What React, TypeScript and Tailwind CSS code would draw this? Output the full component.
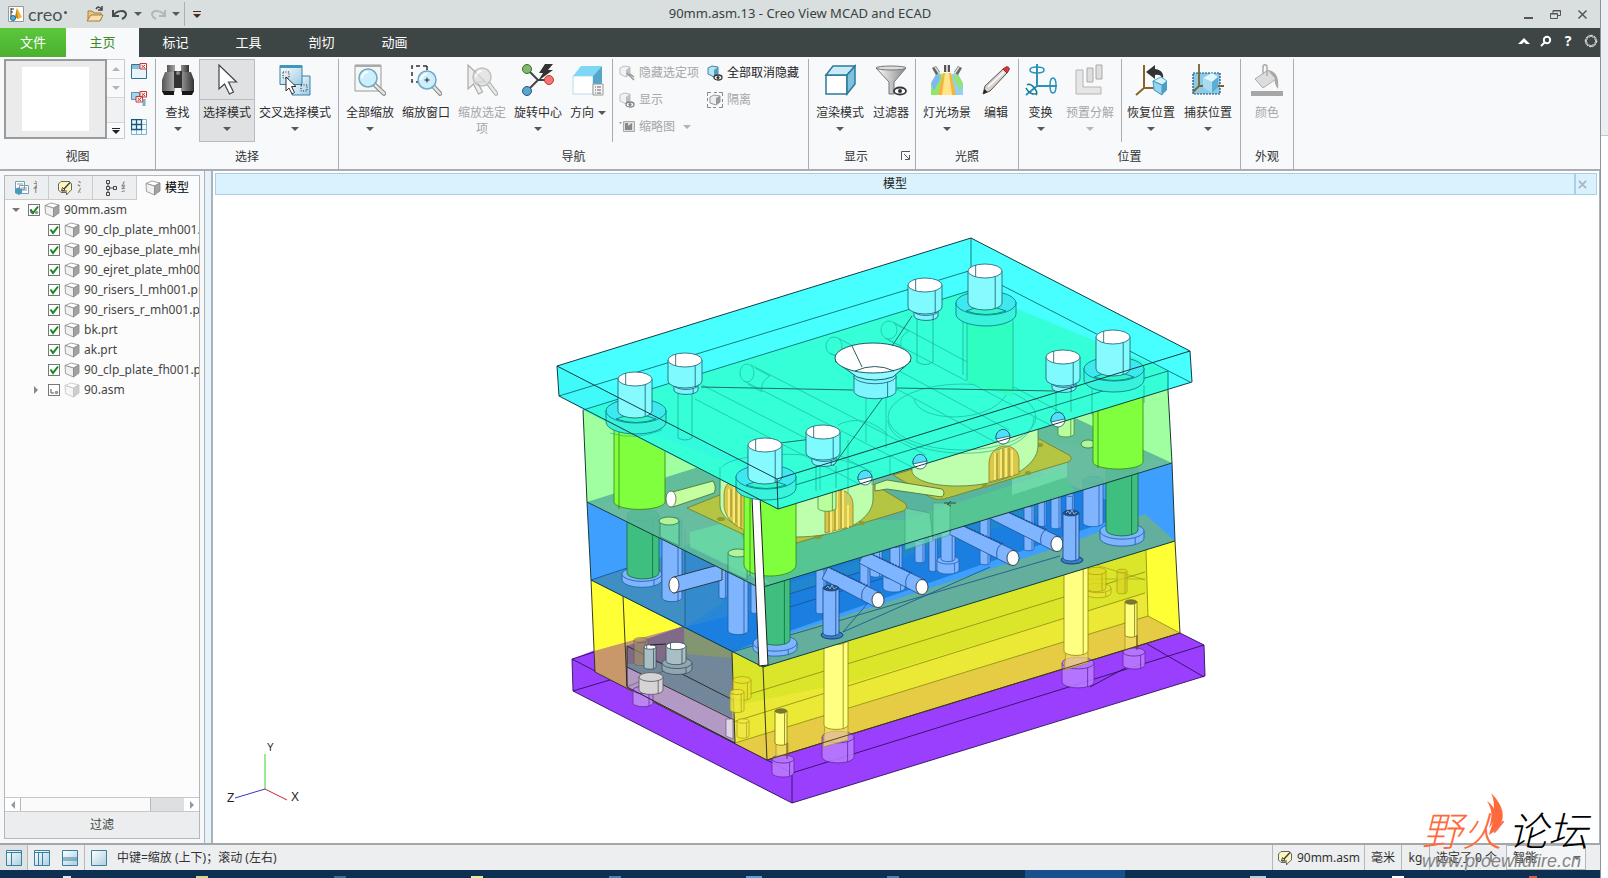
import type { ReactNode } from 'react';
import clsx from 'clsx';

const treeItems = [
  '90_clp_plate_mh001.prt',
  '90_ejbase_plate_mh001.prt',
  '90_ejret_plate_mh001.prt',
  '90_risers_l_mh001.prt',
  '90_risers_r_mh001.prt',
  'bk.prt',
  'ak.prt',
  '90_clp_plate_fh001.prt',
];

const menuTabs = ['标记', '工具', '剖切', '动画'];

/* ---------- small helpers ---------- */

function Caret({ className }: { className?: string }) {
  return (
    <svg viewBox="0 0 8 4" className={clsx('h-1 w-2 shrink-0', className)} fill="currentColor">
      <path d="M0 0h8L4 4z" />
    </svg>
  );
}

function Icon({ children, size = 32 }: { children: ReactNode; size?: number }) {
  return (
    <svg viewBox="0 0 32 32" width={size} height={size} className="shrink-0" aria-hidden="true">
      {children}
    </svg>
  );
}

function Cube({ size = 16, faded = false }: { size?: number; faded?: boolean }) {
  return (
    <svg viewBox="0 0 16 16" width={size} height={size} className="shrink-0" opacity={faded ? 0.5 : 1}>
      <path d="M1 3.500 7 1l8 2-5.500 3z" fill="#fff" stroke="#8a8a8a" strokeWidth=".8" />
      <path d="M1 3.500 9.500 6v9L1.500 11.500z" fill="#f1f1f1" stroke="#8a8a8a" strokeWidth=".8" />
      <path d="M9.500 6 15 3v8l-5.500 4z" fill="#a2a2a2" stroke="#8a8a8a" strokeWidth=".8" />
    </svg>
  );
}

/* ---------- ribbon icons ---------- */

function Binoculars() {
  return (
    <Icon>
      <defs>
        <linearGradient id="bino">
          <stop offset="0" stopColor="#555" />
          <stop offset=".45" stopColor="#bbb" />
          <stop offset="1" stopColor="#333" />
        </linearGradient>
      </defs>
      <path d="M5 1h8v7H5zM19 1h8v7h-8z" fill="url(#bino)" />
      <path d="M3 8h10v20H0V16zM29 8H19v20h13V16z" fill="url(#bino)" />
      <path d="M12 7h8v17h-8z" fill="#333" />
      <path d="M0 27h12v4H2zM20 27h12l-2 4H20z" fill="#161616" />
      <circle cx="16" cy="9" r="2" fill="#888" />
    </Icon>
  );
}

function Arrow({ faded }: { faded?: boolean }) {
  return (
    <path
      d="M8 1v24l5.500-5 5 10 4-2-5-10h8z"
      fill={faded ? '#eee' : '#fff'}
      stroke={faded ? '#aaa' : '#444'}
      strokeWidth="1.200"
    />
  );
}

function CrossSelect() {
  return (
    <Icon>
      <defs>
        <linearGradient id="win" x2="1" y2="1">
          <stop offset="0" stopColor="#fff" />
          <stop offset="1" stopColor="#9ccbe3" />
        </linearGradient>
      </defs>
      <path d="M13 12h18v19H13z" fill="url(#win)" stroke="#3283a6" />
      <path d="M1 1.500h22v19H1z" fill="url(#win)" stroke="#3283a6" />
      <path d="M1 1h22v3H1z" fill="#3e97be" />
      <path d="M4 8h6v6H4zM22 21h6v6h-6z" fill="none" stroke="#222" strokeDasharray="1 1.500" />
      <path d="M7 13v14l3-3 3 6 2.500-1.500-3-6H17z" fill="#fff" stroke="#333" />
    </Icon>
  );
}

function Lens({ x, y, r, faded }: { x: number; y: number; r: number; faded?: boolean }) {
  return (
    <>
      <path d={`M${x + r * 0.7} ${y + r * 0.7}L30 29.500`} stroke="#888" strokeWidth="4.500" strokeLinecap="round" />
      <path d={`M${x + r * 0.7} ${y + r * 0.7}L30 29.500`} stroke="#e3e3e3" strokeWidth="2.500" strokeLinecap="round" />
      <circle cx={x} cy={y} r={r} fill={faded ? '#ddd' : '#cdeefa'} stroke={faded ? '#aaa' : '#6ba9c4'} strokeWidth="1.500" />
      <path d={`M${x - r + 3} ${y}a${r - 3} ${r - 3} 0 0 1 ${r - 3} ${-r + 3}`} stroke="#fff" strokeWidth="2" fill="none" />
    </>
  );
}

function ZoomAll() {
  return (
    <Icon>
      <path d="M1 1h26v26H1z" fill="#f6f6f6" stroke="#999" />
      <path d="M1 1h26v2H1z" fill="#aaa" />
      <Lens x={14} y={14} r={9} />
    </Icon>
  );
}

function ZoomWindow() {
  return (
    <Icon>
      <path d="M17 2H2v16h6M17 2v5" fill="none" stroke="#333" strokeWidth="1.500" strokeDasharray="4 3" />
      <Lens x={17} y={16} r={9} />
      <path d="M14.500 16h5M17 13.500v5" stroke="#222" />
    </Icon>
  );
}

function ZoomSelected() {
  return (
    <Icon>
      <g transform="translate(-6 0)"><Arrow faded /></g>
      <g opacity=".7"><Lens x={16} y={13} r={9} faded /></g>
    </Icon>
  );
}

function SpinCenter() {
  return (
    <Icon>
      <path d="M5 5l11 11L5 27M16 16h11" stroke="#444" strokeWidth="2" fill="none" />
      <path d="M23 0h8l-5 6h5L16 17l5-8h-4z" fill="#333" />
      <circle cx="5" cy="5" r="4.500" fill="#7fba6a" stroke="#3d6b33" />
      <circle cx="5" cy="27" r="4.500" fill="#5aa5cf" stroke="#27597a" />
      <circle cx="27" cy="16" r="4.500" fill="#f77470" stroke="#b53d3a" />
    </Icon>
  );
}

function Orientation() {
  return (
    <Icon>
      <path d="M1 12h20v18H1z" fill="#fff" stroke="#b9dcea" />
      <path d="M1 12 9 2h21l-9 10z" fill="#7ed7f5" />
      <path d="M21 12l9-10v17l-9 11z" fill="#55a6cb" />
      <path d="M21 20h10v11H21z" fill="#f4f4f4" stroke="#999" />
      <path d="M23 23h1m1 0h4M23 26h1m1 0h4M23 29h1m1 0h4" stroke="#666" />
    </Icon>
  );
}

function RenderMode() {
  return (
    <Icon>
      <path d="M2 11h21v19H2z" fill="#fff" stroke="#2a7a9c" strokeWidth="1.500" />
      <path d="M2 11l7-9h22l-8 9z" fill="#c9eaf6" stroke="#2a7a9c" strokeWidth="1.500" />
      <path d="M23 11l8-9v18l-8 10z" fill="#7fc0dd" stroke="#2a7a9c" strokeWidth="1.500" />
    </Icon>
  );
}

function FilterIcon() {
  return (
    <Icon>
      <defs>
        <linearGradient id="fun">
          <stop offset="0" stopColor="#fff" />
          <stop offset="1" stopColor="#888" />
        </linearGradient>
      </defs>
      <path d="M1 4h30L19 18v12h-5V18z" fill="url(#fun)" stroke="#777" />
      <ellipse cx="16" cy="4" rx="15" ry="2" fill="#ddd" stroke="#777" />
      <ellipse cx="25" cy="27" rx="6" ry="3.500" fill="#fff" stroke="#333" strokeWidth="1.800" />
      <circle cx="25" cy="27" r="2" fill="#333" />
    </Icon>
  );
}

function Lights() {
  return (
    <Icon>
      <path d="M0 31V20l6-12 9 4-3 19z" fill="#8ee86b" />
      <path d="M32 31V20L26 8l-9 4 3 19z" fill="#8fd0f7" />
      <path d="M0 19 6 9l4 4-7 14z" fill="#7fb8f2" />
      <path d="M32 19 26 9l-4 4 7 14z" fill="#94e373" />
      <path d="M12 9h8l5 22H7z" fill="#fbb13c" />
      <path d="M14 9h4l3 22H11z" fill="#ffe58a" />
      <path d="M13 1h6v7h-6z" fill="#555" />
      <path d="M15 1h2v7h-2z" fill="#ccc" />
      <path d="M1 4l4-2 4 6-4 3zM31 4l-4-2-4 6 4 3z" fill="#666" />
      <path d="M4 3l4 6M28 3l-4 6" stroke="#ddd" strokeWidth="1.500" />
    </Icon>
  );
}

function PencilIcon() {
  return (
    <Icon>
      <path d="M3 30l2-8L23 5l4 4L10 27z" fill="#d9d2cd" stroke="#555" />
      <path d="M23 5l3-2c2-1 4 1 3 3l-2 3z" fill="#d33b3b" stroke="#8e2525" />
      <path d="M3 30l1.500-5 3 3z" fill="#222" />
      <path d="M8 23 24 8" stroke="#fff" strokeWidth="1.500" />
    </Icon>
  );
}

function TransformIcon() {
  return (
    <Icon>
      <g fill="none" stroke="#2a93bd" strokeWidth="1.500">
        <path d="M12 0v22h20" strokeWidth="2" />
        <path d="M12 22 1 31" strokeWidth="2" />
        <path d="M5 6c0-4 14-4 14 0s-14 4-14 0" />
        <path d="M28 14c4 0 4 15 0 15s-4-15 0-15" />
        <path d="M2 21c4-3 12 7 9 10M1 24c3 6 8 7 11 5" stroke="#167a8b" />
      </g>
    </Icon>
  );
}

function ExplodeIcon() {
  return (
    <Icon>
      <path d="M2 6h7v17h18v7H2z" fill="#e6e6e6" stroke="#b5b5b5" />
      <path d="M13 4h6v14h-6zM22 1h6v14h-6z" fill="#dedede" stroke="#aaa" />
    </Icon>
  );
}

function RestoreIcon() {
  return (
    <Icon>
      <path d="M9 1v23M9 24l-8 7M9 24h12" stroke="#8a6327" strokeWidth="2" fill="none" />
      <path d="M11 8l9-7v4c7 1 9 5 8 10-2-4-4-5-8-4v4z" fill="#333" />
      <path d="M18 17l8-4 6 4-5 4z" fill="#d5f3ff" stroke="#55a5c8" />
      <path d="M18 17l9 4v10l-8-5z" fill="#94d5ef" stroke="#4796bc" />
      <path d="M27 21l5-4v9l-5 5z" fill="#4a9fc6" />
    </Icon>
  );
}

function CaptureIcon() {
  return (
    <Icon>
      <path d="M1 9h27v21H1z" fill="#8ecae8" stroke="#0c4c73" strokeWidth="1.200" strokeDasharray="2 1" />
      <path d="M7 0v22M7 22l-6 6M7 22h25" stroke="#776332" strokeWidth="1.800" />
      <path d="M11 14l9-5 6 4-6 5z" fill="#e2f7ff" />
      <path d="M11 14l9 4v11l-9-6z" fill="#a9dcf1" />
      <path d="M20 18l6-5v10l-6 6z" fill="#5aaed3" />
    </Icon>
  );
}

function PaintIcon() {
  return (
    <Icon>
      <path d="M0 27h32v5H0z" fill="#a6a6a6" />
      <path d="M4 15 17 6l8 9-13 9z" fill="#ddd" stroke="#aaa" />
      <path d="M17 6c9 2 11 8 10 19-3-4-4-8-3-11z" fill="#a8a8a8" />
      <path d="M12 10V3c0-3 4-3 4 0v9" stroke="#aaa" strokeWidth="1.500" fill="none" />
    </Icon>
  );
}

function SmallCube({ faded, eye }: { faded?: boolean; eye?: boolean }) {
  return (
    <svg viewBox="0 0 16 16" width="16" height="16" className="shrink-0" opacity={faded ? 0.6 : 1}>
      <path d="M1 3 5 1l6 1v7l-4 3-6-3z" fill={faded ? '#eee' : '#b9e2f2'} stroke={faded ? '#999' : '#3b86a6'} />
      <path d="M7 5l4-3v7l-4 3z" fill={faded ? '#999' : '#4c9fc2'} />
      {eye ? (
        <g>
          <ellipse cx="11" cy="12.500" rx="4" ry="2.500" fill="#fff" stroke="#333" strokeWidth="1.300" />
          <circle cx="11" cy="12.500" r="1.500" fill="#333" />
        </g>
      ) : (
        <path d="M8 8l7 7M11 9l4 3" stroke="#555" strokeWidth="1.500" />
      )}
    </svg>
  );
}

function IsolateIcon() {
  return (
    <svg viewBox="0 0 16 16" width="16" height="16" className="shrink-0">
      <path d="M.5 4V.5H4M7 .5h3M12 .5h3.500V4M15.500 7v3M15.500 12v3.500H12M9 15.500H6M4 15.500H.5V12M.5 9V6" stroke="#888" fill="none" />
      <path d="M3 5l4-2 6 1v6l-4 3-6-2z" fill="#eee" stroke="#999" />
      <path d="M9 6l4-2v6l-4 3z" fill="#999" />
    </svg>
  );
}

/* ---------- ribbon parts ---------- */

type ToolProps = {
  icon: ReactNode;
  label: string;
  width: string;
  menu?: boolean;
  disabled?: boolean;
  active?: boolean;
};

function Tool({ icon, label, width, menu, disabled, active }: ToolProps) {
  return (
    <button
      disabled={disabled}
      className={clsx(
        'flex h-[83px] shrink-0 flex-col items-center border',
        width,
        active ? 'border-[#b9bcbe] bg-[#dfe1e2]' : 'border-transparent',
        disabled ? 'text-[#a5a7a9]' : 'text-[#2d2d2d]',
      )}
    >
      <span className={clsx('flex h-10 w-full shrink-0 items-center justify-center', active && 'border-b border-[#b9bcbe]')}>{icon}</span>
      <span className="mt-[3px] whitespace-nowrap text-xs leading-5">{label}</span>
      {menu && <Caret className={clsx('mt-1', disabled ? 'text-[#b5b7b9]' : 'text-[#55585a]')} />}
    </button>
  );
}

function Group({ title, width, children, launcher }: { title: string; width: string; children: ReactNode; launcher?: boolean }) {
  return (
    <section className={clsx('relative flex shrink-0 flex-col border-r border-[#a9acb0]', width)}>
      <div className="flex h-[84px] items-start">{children}</div>
      <h2 className={clsx('pt-1.5 text-center text-xs leading-4 text-[#333]', launcher && 'pr-3')}>{title}</h2>
      {launcher && (
        <button aria-label="显示选项" className="absolute right-1 bottom-2 size-2.5">
          <svg viewBox="0 0 10 10" className="size-full">
            <path d="M.5 9V.5H9M3 3l5 5M8.500 4v4.500H4" stroke="#555" fill="none" />
          </svg>
        </button>
      )}
    </section>
  );
}

function SmallTool({ icon, label, disabled, menu }: { icon: ReactNode; label: string; disabled?: boolean; menu?: boolean }) {
  return (
    <button disabled={disabled} className={clsx('flex h-[27px] items-center gap-1 whitespace-nowrap text-xs', disabled ? 'text-[#a5a7a9]' : 'text-[#222]')}>
      {icon}
      {label}
      {menu && <Caret className="ml-1 text-[#b0b2b4]" />}
    </button>
  );
}

function ViewIcon({ kind }: { kind: 'one' | 'two' | 'grid' }) {
  return (
    <svg viewBox="0 0 16 16" width="16" height="16">
      {kind === 'one' && (
        <>
          <path d="M.5 1.500h15v14H.5z" fill="#e7f4fa" stroke="#38708c" />
          <path d="M1 2h8v4H1z" fill="#85bfdb" />
          <path d="M9 .5h6.500v5.500H9z" fill="#fff" stroke="#c33" />
          <path d="M10.500 2l3.500 3M14 2l-3.500 3" stroke="#c33" />
        </>
      )}
      {kind === 'two' && (
        <>
          <path d="M.5 1.500h8v7h-8z" fill="#a9d3e6" stroke="#5a93ae" />
          <path d="M9 .5h6.500v5.500H9zM5 5.500h6.500v5.500H5z" fill="#fff" stroke="#c33" />
          <path d="M10.500 2l3.500 3M14 2l-3.500 3M6.500 7l3.500 3M10 7l-3.500 3" stroke="#c33" />
          <path d="M13 8v7" stroke="#8ab" strokeWidth="3" />
        </>
      )}
      {kind === 'grid' && (
        <>
          <path d="M5 .5h10.500v15H.5V10M10.500.5v15M5.500 10v5.500M.5 10.500h15M10 5.500h5.500" fill="none" stroke="#7eb4cc" />
          <path d="M.5.500h10v10H.5zM5.500.500v10M.5 5.500h10" fill="#eaf6fb" stroke="#15587b" strokeWidth="1.300" />
        </>
      )}
    </svg>
  );
}

function Ribbon() {
  return (
    <div className="flex h-28 shrink-0 overflow-hidden bg-[#f8f9fb] pt-[2px]">
      <Group title="视图" width="w-[156px]">
        <button aria-label="视图缩略图" className="ml-1 h-20 w-[103px] border-2 border-[#9a9b9d] bg-[#ebebec] px-4 py-1.5">
          <span className="block h-full bg-white" />
        </button>
        <div className="flex h-20 w-[18px] flex-col border-y border-r border-[#c9cbcd] text-[#b5b5b5]">
          <button aria-label="上一个" className="flex h-[19px] items-center justify-center border-b border-[#d5d7d9]"><Caret className="rotate-180" /></button>
          <button aria-label="下一个" className="flex h-[19px] items-center justify-center border-b border-[#d5d7d9]"><Caret /></button>
          <span className="flex-1 bg-[#f0f1f2]" />
          <button aria-label="更多视图" className="flex h-4 flex-col items-center justify-center gap-px border-t border-[#d5d7d9] text-[#222]">
            <span className="h-px w-2 bg-[#222]" />
            <Caret />
          </button>
        </div>
        <div className="flex h-20 flex-col justify-between py-1 pl-1.5">
          <button aria-label="关闭视图"><ViewIcon kind="one" /></button>
          <button aria-label="关闭全部视图"><ViewIcon kind="two" /></button>
          <button aria-label="平铺视图"><ViewIcon kind="grid" /></button>
        </div>
      </Group>

      <Group title="选择" width="w-[183px]">
        <Tool icon={<Binoculars />} label="查找" width="w-[43px]" menu />
        <Tool icon={<Icon><Arrow /></Icon>} label="选择模式" width="w-14" menu active />
        <Tool icon={<CrossSelect />} label="交叉选择模式" width="w-20" menu />
      </Group>

      <Group title="导航" width="w-[470px]">
        <span className="w-[3px]" />
        <Tool icon={<ZoomAll />} label="全部缩放" width="w-14" menu />
        <Tool icon={<ZoomWindow />} label="缩放窗口" width="w-14" />
        <div className="w-14">
          <button disabled className="flex w-14 flex-col items-center text-[#a5a7a9]">
            <span className="flex h-[41px] items-center"><ZoomSelected /></span>
            <span className="mt-[5px] px-1 text-xs leading-4">缩放选定项</span>
          </button>
        </div>
        <Tool icon={<SpinCenter />} label="旋转中心" width="w-14" menu />
        <button className="flex h-[83px] w-[44px] flex-col items-center text-[#2d2d2d]">
          <span className="flex h-[41px] shrink-0 items-center"><Orientation /></span>
          <span className="mt-[3px] flex items-center gap-1 whitespace-nowrap text-xs leading-5">方向<Caret className="text-[#55585a]" /></span>
        </button>
        <div className="ml-0.5 grid h-[83px] grid-cols-[88px_auto] content-start border-l border-[#a9acb0] pl-1.5">
          <SmallTool icon={<SmallCube faded />} label="隐藏选定项" disabled />
          <SmallTool icon={<SmallCube eye />} label="全部取消隐藏" />
          <SmallTool icon={<SmallCube faded eye />} label="显示" disabled />
          <SmallTool icon={<IsolateIcon />} label="隔离" disabled />
          <SmallTool
            icon={
              <svg viewBox="0 0 16 16" width="16" height="16">
                <path d="M0 3h3L1.500 5z" fill="#999" />
                <path d="M4.500 2.500h11v10h-11z" fill="#ddd" stroke="#aaa" />
                <path d="M6 4h3v3l4-3v7H6z" fill="#888" />
              </svg>
            }
            label="缩略图"
            disabled
            menu
          />
        </div>
      </Group>

      <Group title="显示" width="w-[107px]" launcher>
        <span className="w-0.5" />
        <Tool icon={<RenderMode />} label="渲染模式" width="w-[58px]" menu />
        <Tool icon={<FilterIcon />} label="过滤器" width="w-[44px]" />
      </Group>

      <Group title="光照" width="w-[103px]">
        <span className="w-0.5" />
        <Tool icon={<Lights />} label="灯光场景" width="w-[58px]" menu />
        <Tool icon={<PencilIcon />} label="编辑" width="w-[40px]" />
      </Group>

      <Group title="位置" width="w-[222px]">
        <Tool icon={<TransformIcon />} label="变换" width="w-[43px]" menu />
        <Tool icon={<ExplodeIcon />} label="预置分解" width="w-14" menu disabled />
        <span className="h-[83px] w-1 border-r border-[#a9acb0]" />
        <Tool icon={<RestoreIcon />} label="恢复位置" width="w-[58px]" menu />
        <Tool icon={<CaptureIcon />} label="捕获位置" width="w-[56px]" menu />
      </Group>

      <Group title="外观" width="w-[53px]">
        <Tool icon={<PaintIcon />} label="颜色" width="w-[52px]" disabled />
      </Group>
    </div>
  );
}

/* ---------- title bar ---------- */

function TitleBar() {
  return (
    <header className="relative flex h-7 shrink-0 items-center bg-[#d9dfdf] pl-2 text-[#555a5c]">
      <svg viewBox="0 0 16 16" width="16" height="16">
        <path d="M.5.500h15v15H.5z" fill="#fff" stroke="#999" />
        <path d="M3 2v9M3 3h3M3 6h2" stroke="#333" fill="none" />
        <path d="M9 2l5 9-4 2-3-2z" fill="#f2b632" />
        <path d="M9 2l1 11-3-2z" fill="#c98511" />
        <circle cx="5" cy="12" r="2.500" fill="#58aee0" stroke="#1a669c" />
      </svg>
      <span className="ml-1 flex w-12 items-center font-[Lato] text-lg leading-6 text-[#4c5254]">
        creo
        <span className="ml-px size-[3px] -translate-y-0.5 rounded-full bg-[#4c5254]" />
      </span>
      <button aria-label="打开" className="ml-2.5">
        <svg viewBox="0 0 18 16" width="18" height="16">
          <path d="M2 14V5h4l2 2h7v7z" fill="#e6c486" stroke="#a87f3a" />
          <path d="M1 15 5 9h12l-3 6z" fill="#f8dfaf" stroke="#a87f3a" />
          <path d="M10 3c2-3 4-2 5 0M16 0v4h-4" stroke="#444" strokeWidth="1.500" fill="none" />
        </svg>
      </button>
      <button aria-label="撤消" className="ml-2">
        <svg viewBox="0 0 16 14" width="16" height="14" fill="none" stroke="#454a4c" strokeWidth="2">
          <path d="M2 8c2-4 11-6 12-1 0 3-2 4-4 5" />
          <path d="M1 3v6h6" />
        </svg>
      </button>
      <button aria-label="撤消列表" className="ml-1.5"><Caret /></button>
      <button aria-label="重做" className="ml-2">
        <svg viewBox="0 0 16 14" width="16" height="14" fill="none" stroke="#b1b6b7" strokeWidth="2">
          <path d="M14 8C12 4 3 2 2 7c0 3 2 4 4 5" />
          <path d="M15 3v6H9" />
        </svg>
      </button>
      <button aria-label="重做列表" className="ml-1.5"><Caret /></button>
      <span className="ml-1 h-6 w-px bg-[#aab0b2]" />
      <button aria-label="自定义快速访问工具栏" className="ml-2 flex flex-col items-center gap-0.5 text-[#4a2e18]">
        <span className="h-px w-2 bg-current" />
        <Caret />
      </button>
      <h1 className="absolute left-1/2 -translate-x-1/2 whitespace-nowrap text-[13px] text-[#3a3f41]">90mm.asm.13 - Creo View MCAD and ECAD</h1>
      <div className="ml-auto flex items-center gap-4 pr-3">
        <button aria-label="最小化">
          <svg viewBox="0 0 11 11" width="11" height="11"><path d="M1 9h9" stroke="#555" strokeWidth="2" /></svg>
        </button>
        <button aria-label="还原">
          <svg viewBox="0 0 11 11" width="11" height="11" fill="none" stroke="#555">
            <path d="M.5 4.500h7v5h-7zM.5 5h7M3 4V1.500h7.500v5H8M3 2h7.500" />
          </svg>
        </button>
        <button aria-label="关闭">
          <svg viewBox="0 0 11 11" width="11" height="11"><path d="M1.500 1.500l8 8M9.500 1.500l-8 8" stroke="#555" strokeWidth="1.500" /></svg>
        </button>
      </div>
    </header>
  );
}

function MenuTabs() {
  return (
    <nav className="flex h-[29px] shrink-0 bg-[#3d4545] text-[13px] text-white">
      <button className="w-[66px] bg-gradient-to-b from-[#5cc73b] to-[#4bb02f]">文件</button>
      <button className="w-[73px] bg-[#f8f9fb] text-[#3f8a26]">主页</button>
      {menuTabs.map((tab) => (
        <button key={tab} className="w-[73px]">{tab}</button>
      ))}
      <div className="ml-auto flex items-center gap-2.5 pr-0.5 pb-1">
        <button aria-label="折叠功能区">
          <svg viewBox="0 0 12 8" width="12" height="8"><path d="M0 7 6 1l6 6H8L6 5 4 7z" fill="#fff" /></svg>
        </button>
        <button aria-label="搜索">
          <svg viewBox="0 0 12 12" width="12" height="12" fill="none" stroke="#fff" strokeWidth="2">
            <circle cx="7" cy="5" r="3.200" /><path d="M5 7l-4 4" />
          </svg>
        </button>
        <button aria-label="帮助" className="w-3 text-sm font-bold">?</button>
        <button aria-label="PTC">
          <svg viewBox="0 0 14 14" width="14" height="14" fill="none" stroke="#dfe3e3">
            <path d="M3 3h3l1-2 1 2h3v3l2 1-2 1v3H8l-1 2-1-2H3V8L1 7l2-1z" />
            <circle cx="7" cy="7" r="5.800" strokeDasharray="2 1" />
          </svg>
        </button>
      </div>
    </nav>
  );
}

/* ---------- model tree ---------- */

function Check({ label, asm, checked = true }: { label: string; asm?: boolean; checked?: boolean }) {
  return (
    <span className="relative size-3 shrink-0">
      <input
        type="checkbox"
        defaultChecked={checked}
        aria-label={label}
        className="peer block size-3 appearance-none border border-[#777] bg-white"
      />
      <svg viewBox="0 0 12 12" className="pointer-events-none absolute inset-0 hidden size-3 peer-checked:block">
        <path d="M2.500 5.500 5 9l5-6.500" stroke="#128a1a" strokeWidth="2" fill="none" />
      </svg>
      {asm && (
        <svg viewBox="0 0 12 12" className="pointer-events-none absolute inset-0 size-3">
          <path d="M3 5v4h3" stroke="#555" fill="none" /><circle cx="8.500" cy="8.500" r="1.800" fill="#999" />
        </svg>
      )}
    </span>
  );
}

function ModelTree() {
  return (
    <aside className="my-1 ml-1 flex w-[196px] shrink-0 flex-col border border-[#b5b8ba] bg-white text-xs text-[#444]">
      <div className="flex h-6 shrink-0">
        <button aria-label="视图列表" className="flex w-11 items-center gap-1 overflow-hidden border-r border-b border-[#c9cbcd] bg-[#eceef0] pl-2">
          <svg viewBox="0 0 16 16" width="16" height="16" className="shrink-0">
            <path d="M2.500 1.500h9v8h-9zM6.500 5.500h9v8h-9z" fill="#fff" stroke="#7d9dac" />
            <path d="M4 4h6M8 8h6M8 10h6" stroke="#7d9dac" />
            <path d="M2 9l3-1.500L9 9v4l-3 2-4-2z" fill="#4798bb" />
          </svg>
          <span className="w-1 overflow-hidden text-[#777]">视</span>
        </button>
        <button aria-label="注释" className="flex w-11 items-center gap-1 overflow-hidden border-r border-b border-[#c9cbcd] bg-[#eceef0] pl-2">
          <NoteIcon />
          <span className="w-1 overflow-hidden text-[#777]">注</span>
        </button>
        <button aria-label="结构" className="flex w-11 items-center gap-1 overflow-hidden border-r border-b border-[#c9cbcd] bg-[#eceef0] pl-3">
          <svg viewBox="0 0 12 16" width="12" height="16" className="shrink-0" fill="none" stroke="#444">
            <path d="M1.500.500h3v3h-3zM1.500 6.500h3v3h-3zM1.500 12.500h3v3h-3zM8.500 6.500h3v3h-3zM3 4v2M3 10v2M5 8h3" />
          </svg>
          <span className="w-1 overflow-hidden text-[#777]">结</span>
        </button>
        <button className="flex flex-1 items-center gap-1 bg-[#fafbfc] pl-2 text-black"><Cube />模型</button>
      </div>

      <ul className="min-h-0 flex-1 overflow-hidden whitespace-nowrap bg-[#fcfcfc]">
        <li className="flex h-5 items-center pl-[7px]">
          <Caret className="mr-2 text-[#777]" />
          <Check label="90mm.asm" asm />
          <span className="mx-1"><Cube /></span>
          90mm.asm
        </li>
        {treeItems.map((item) => (
          <li key={item} className="flex h-5 items-center pl-[43px]">
            <Check label={item} />
            <span className="mx-1"><Cube /></span>
            {item}
          </li>
        ))}
        <li className="flex h-5 items-center pl-[27px]">
          <Caret className="mr-2 -rotate-90 text-[#888]" />
          <Check label="90.asm" asm checked={false} />
          <span className="mx-1"><Cube faded /></span>
          90.asm
        </li>
      </ul>

      <div className="flex h-[15px] shrink-0 border-y border-[#c5c8ca] bg-white text-[#999]">
        <button aria-label="向左滚动" className="flex w-[15px] items-center justify-center"><Caret className="rotate-90" /></button>
        <div className="flex-1 bg-[#dddfe0]"><div className="h-full w-4/5 border-x border-[#b5b8ba] bg-[#fafafa]" /></div>
        <button aria-label="向右滚动" className="flex w-[15px] items-center justify-center"><Caret className="-rotate-90" /></button>
      </div>
      <button className="h-[26px] shrink-0 bg-[#ebedee]">过滤</button>
    </aside>
  );
}

function NoteIcon() {
  return (
    <svg viewBox="0 0 16 16" width="16" height="16" className="shrink-0">
      <path d="M4 1.500h8.500l2 2.500v6l-3 2.500-2 2.500v-2.500H4L1.500 10V4z" fill="#fdf6bd" stroke="#666" />
      <path d="M13 2.500 7 9" stroke="#444" strokeWidth="1.500" />
      <path d="M4.500 11l1-3.500L8 10zM5 11h5" stroke="#444" fill="none" />
    </svg>
  );
}

/* ---------- mold assembly ---------- */

type CylProps = { x: number; y: number; r: number; b: number; ry?: number; fill: string; top?: string; line?: string; o?: number };

// upright cylinder: top centre (x, y), radius r, bottom centre at height b
function Cyl({ x, y, r, b, ry = r * 0.37, fill, top, line = '#175a6d', o = 1 }: CylProps) {
  return (
    <g stroke={line} strokeWidth=".8" opacity={o}>
      <path d={`M${x - r} ${y}V${b}A${r} ${ry} 0 0 0 ${x + r} ${b}V${y}z`} fill={fill} />
      <path d={`M${x + r * 0.6} ${y + ry * 0.8}V${b + ry * 0.8}`} fill="none" />
      <ellipse cx={x} cy={y} rx={r} ry={ry} fill={top ?? fill} />
      {top === '#fff' && <path d={`M${x - r * 0.55} ${y - ry * 0.8}v${ry * 1.6}`} fill="none" />}
    </g>
  );
}

// horizontal bore running up-left from its open end
function Rod({ x, y, sx, sy, r = 6, fill }: { x: number; y: number; sx: number; sy: number; r?: number; fill: string }) {
  const cx = x - 13;
  const cy = y - 7;
  return (
    <g stroke="#1c4f91" strokeWidth=".8" fill={fill}>
      <path d={`M${sx + 3} ${sy - r}L${x + 3} ${y - r - 1}L${x - 3} ${y + r + 1}L${sx - 3} ${sy + r}z`} />
      <path d={`M${cx + 3} ${cy - r - 2}q-8 4-6 ${r * 2 + 3}`} />
      <path d={`M${sx + 3} ${sy - r}L${cx + 3} ${cy - r - 1}`} strokeWidth="1.500" strokeDasharray="2 1" />
      <ellipse cx={x} cy={y} rx={r} ry={r + 1.5} fill="#fff" stroke="#222" />
    </g>
  );
}

const blue = '#7fb4ff';
const deepBluePins = [
  [821, 568, 5, 612], [865, 555, 5, 586], [876, 545, 6, 575], [920, 540, 5, 561], [933, 535, 4, 570], [985, 515, 5, 563],
  [1029, 505, 5, 549], [1042, 500, 4, 525], [1056, 495, 5, 527], [1070, 495, 4, 530], [1093, 480, 10, 523], [723, 555, 4, 597], [755, 560, 4, 612],
];
const coverHoles = [
  [685, 360, 385], [823, 432, 457], [925, 285, 311], [1063, 357, 383],
];
const guideHoles = [
  [635, 379, 414], [765, 445, 480], [985, 271, 306], [1113, 337, 372],
];

function Mold() {
  return (
    <svg viewBox="215 195 1382 648" preserveAspectRatio="xMidYMid meet" className="h-full w-full" role="img" aria-label="90mm.asm">
      {/* bottom clamp plate */}
      <path d="M572 659 595 650 1180 633 1204 645 1205 676 792 803 573 691z" fill="#9b3fff" />
      <g stroke="#30105c" fill="none" strokeWidth=".9">
        <path d="M572 659 792 773 1204 645M572 659l1 32 219 112 413-127-1-31-24-12M792 773v30M572 659l26-8M573 691l80-24M1142 641l62 36" />
        <path d="M1090 687l37-20" />
      </g>

      {/* riser blocks */}
      <path d="M591 580 763 667 1175 541 1180 633 767 760 595 672z" fill="#ffff35" />
      <path d="M595 650 684 626 735 652v91L595 672z" fill="#c8986b" />
      <path d="M591 580 684 626 594 651z" fill="#ffff35" />
      <path d="M627 646 684 626 732 652 734 743 627 687z" fill="#b39ac5" />
      <path d="M627 646 684 626 732 652V718L627 667z" fill="#73879a" />
      <path d="M627 646 684 626V662L627 664z" fill="#806a88" />
      <path d="M684 626 732 652V658l-47-4z" fill="#8a9b60" opacity=".7" />
      <path d="M732 652 763 667 1146 550 1148 616 735 743z" fill="#dbe52a" />
      <path d="M733 706 860 680 1146 593 1148 616 735 743z" fill="#ebe936" />
      <path d="M735 743 1148 616 1180 633 767 760z" fill="#e6cc45" />
      <g stroke="#878a12" strokeWidth=".8" fill="none">
        <path d="M750 694 1145 572M733 722 1145 593M735 743 1148 616M1146 550l2 66 32 17" />
        <path d="M1080 560l65 20M1080 579h65" opacity=".6" />
      </g>
      <g stroke="#222" strokeWidth=".9" fill="none">
        <path d="M591 580l4 92 172 88 413-127-5-92M763 667l4 93M732 652l3 91M623 596l4 91M627 646v40M627 646 733 700M627 667l107 53" />
        <path d="M627 687l57-25" opacity=".4" />
      </g>
      <Cyl x={641} y={640} r={7} b={663} fill="#a99762" line="#605540" o={0.6} />
      <Cyl x={643} y={690} r={10} b={703} fill="#bb84ef" line="#61349a" />
      <Cyl x={651} y={677} r={12} b={690} fill="#d6d3d7" line="#555" />
      <Cyl x={677} y={663} r={15} b={669} fill="#91a6b0" line="#364e58" />
      <Cyl x={676} y={646} r={10} b={661} fill="#a9bfc5" top="#fff" line="#364e58" />
      <Cyl x={650} y={647} r={6} b={667} fill="#a9bfc5" top="#fff" line="#364e58" />
      <path d="M650 645l16-1M627 687 735 743" stroke="#222" />
      <Cyl x={742} y={680} r={9} b={697} fill="#e9e32d" line="#a1980f" o={0.8} />
      <Cyl x={737} y={692} r={7} b={710} fill="#eee83c" line="#a1980f" o={0.8} />
      <Cyl x={743} y={721} r={6} b={736} fill="#f0e84a" line="#a1980f" o={0.8} />
      <path d="M726 719h7v20l-7-3z" fill="#ded5e5" stroke="#6b5a7b" strokeWidth=".7" />
      <Cyl x={1098} y={588} r={13} b={593} fill="#e9e334" line="#a1980f" o={0.8} />
      <Cyl x={1096} y={571} r={10} b={588} fill="#dfda22" line="#a1980f" o={0.8} />
      <Cyl x={1122} y={571} r={5} b={592} fill="#dcd727" line="#a1980f" o={0.8} />
      <Cyl x={783} y={759} r={11} b={773} fill="#bb7dff" line="#58238e" o={0.85} />
      <Cyl x={838} y={737} r={16} b={757} fill="#bb7dff" line="#58238e" o={0.85} />
      <Cyl x={1078} y={663} r={16} b={682} fill="#bb7dff" line="#58238e" o={0.85} />
      <Cyl x={1134} y={652} r={11} b={665} fill="#bb7dff" line="#58238e" o={0.85} />
      <g fill="#f2de66" fillOpacity=".7" stroke="#a58a20" strokeWidth=".7">
        <path d="M825 725h23v15l-25 7zM1066 652h22v11l-24 7zM776 743h12v11l-12 3zM1125 635h12v11l-12 4z" />
      </g>
      <path d="M767 760 1180 633M787 743v16M1137 635v15" stroke="#4a3a10" strokeWidth=".9" />
      <Cyl x={781} y={711} r={6} b={743} fill="#ffff82" top="#77763b" line="#77710a" />
      <Cyl x={1131} y={602} r={6} b={635} fill="#ffff82" top="#77763b" line="#77710a" />
      <Cyl x={836} y={640} r={12} b={725} fill="#ffff82" line="#8b850f" />
      <Cyl x={1076} y={565} r={12} b={651} fill="#ffff82" line="#8b850f" />

      {/* B plate */}
      <path d="M587 502 760 588 1172 463 1175 541 763 667 591 580z" fill="#3f9fff" />
      <path d="M591 580 720 540 1000 455 1135 512 763 640 732 652z" fill="#1b7fe2" />
      <path d="M591 580 650 562 720 530 722 604 686 627z" fill="#3f8fc4" />
      <path d="M685 547 790 553V600L686 627z" fill="#2f87d2" opacity=".7" />
      <path d="M732 652 1065 545 1145 514 1175 541 763 667z" fill="#63ae9d" />
      <path d="M780 586 1050 500 1045 512 780 597z" fill="#258abf" opacity=".6" />
      <g stroke="#15508e" strokeWidth=".8" fill="none">
        <path d="M591 580l60-20M685 530v96M770 600l120-37M780 610l110-34M843 632 990 567M843 632l30-35M732 652 1060 556" />
      </g>
      {deepBluePins.map(([x, y, r, b]) => (
        <Cyl key={x} x={x} y={y} r={r} b={b} fill={blue} line="#2361ae" />
      ))}
      <Cyl x={894} y={575} r={11} b={588} fill={blue} line="#2361ae" />
      <Cyl x={896} y={545} r={6} b={576} fill={blue} line="#2361ae" />
      <Cyl x={948} y={560} r={11} b={570} fill={blue} line="#2361ae" />
      <Cyl x={948} y={525} r={7} b={559} fill={blue} line="#2361ae" />
      <Rod x={878} y={600} sx={825} sy={573} fill={blue} />
      <Rod x={922} y={587} sx={862} sy={557} fill={blue} />
      <Rod x={1013} y={558} sx={952} sy={528} fill={blue} />
      <Rod x={1057} y={544} sx={990} sy={511} fill={blue} />
      <Cyl x={642} y={574} r={20} b={580} fill={blue} line="#1c5ca3" />
      <Cyl x={643} y={515} r={16} b={573} fill="#3fbf7f" line="#17683f" />
      <Cyl x={775} y={643} r={22} b={648} fill={blue} line="#1c5ca3" />
      <Cyl x={776} y={575} r={14} b={640} fill="#3fbf7f" line="#17683f" />
      <Cyl x={1122} y={531} r={22} b={538} fill={blue} line="#1c5ca3" />
      <Cyl x={1122} y={465} r={16} b={530} fill="#3fbf7f" line="#17683f" />
      <Cyl x={672} y={521} r={10} b={598} fill={blue} line="#1c5ca3" />
      <g stroke="#222" strokeWidth=".8">
        <path d="M674 577l48-13v16l-48 13z" fill={blue} />
        <ellipse cx="674" cy="585" rx="5" ry="8" fill="#fff" />
      </g>
      <Cyl x={738} y={553} r={10} b={631} fill={blue} line="#1c5ca3" />

      {/* A plate */}
      <path d="M583 410 760 480 1168 390 1172 463 1040 440 760 500 587 502z" fill="#a0ff9f" />
      <path d="M587 502 740 454 1000 378 1073 417 1172 463 760 588z" fill="#5cb89a" opacity=".93" />
      <path d="M690 532 735 520 905 520 950 505 1060 470 1075 491 770 585 690 545z" fill="#54c593" />
      <path d="M690 532 735 520 752 560 770 585 690 547z" fill="#6fdcab" opacity=".7" />
      <path d="M1012 475l55-18v20l-55 18z" fill="#7ee6b6" opacity=".6" />
      <path d="M905 508l25 5 3 28-28 9zM933 503h17v32l-17 5z" fill="#72dfae" opacity=".65" stroke="#398b6a" strokeWidth=".6" />
      <path d="M944 503h12m-9 2 4-4m-4 3 4 2" stroke="#31542f" fill="none" />
      <g fill="#6cd9a5" stroke="#23764e" strokeWidth=".8">
        <path d="M660 521v16l19 9v-25zM728 553v18l19 9v-27z" opacity=".8" />
        <ellipse cx="669" cy="521" rx="10" ry="4" fill="#b5f39b" />
        <ellipse cx="738" cy="553" rx="10" ry="4" fill="#b5f39b" />
        <ellipse cx="1088" cy="444" rx="7" ry="4" fill="#b5f39b" />
      </g>
      <g stroke="#737b21" strokeWidth=".8" fill="#b4c443">
        <path d="M687 508 745 485 860 476 905 503q4 5-2 8L780 548q-8 3-16-4z" />
        <path d="M893 475 1030 434 1069 455q5 4-1 7L944 499q-7 2-14-2z" />
      </g>
      <g fill="#8d9b33">
        <ellipse cx="721" cy="519" rx="4" ry="2" />
        <ellipse cx="818" cy="537" rx="4" ry="2" />
        <ellipse cx="862" cy="523" rx="3" ry="2" />
        <ellipse cx="1040" cy="445" rx="3" ry="2" />
        <ellipse cx="1028" cy="473" rx="3" ry="2" />
        <ellipse cx="985" cy="486" rx="3" ry="2" />
      </g>
      <g stroke="#547a4b" strokeWidth=".8" fill="#beffad">
        <path d="M720 470v35c0 20 40 32 75 32 50 0 78-18 78-38v-39z" />
        <path d="M912 430v42c4 10 25 14 45 14 50 0 81-20 81-40v-40z" />
      </g>
      <g stroke="#8b7c20" strokeWidth=".8" fill="#d8c94b">
        <path d="M724 505v-10c0-20 24-20 24 0v36c-14-4-24-15-24-26zM825 533v-28c0-20 28-20 28 0v21zM989 482v-18c0-22 29-24 30-5v15z" />
        <path d="M729 489v28M734 487v36M739 487v40M744 490v40M831 494v38M837 490v40M843 490v38M848 494v34M995 453v27M1001 449v29M1006 448v29M1012 450v26" stroke="#fff28a" strokeWidth="1.500" />
        <path d="M731 489v28M736 487v36M741 487v40M829 494v38M835 490v40M841 490v38M997 453v27M1003 449v29M1009 448v28" />
      </g>
      <g stroke="#4b6635" strokeWidth=".8" fill="#c6ff9f">
        <path d="M669 493l44-12q4 6 1 12l-41 14z" />
        <ellipse cx="671" cy="499" rx="5" ry="8" fill="#fff" />
        <path d="M875 484l12-4 55 9q4 4 0 8l-55-8-12 2z" />
      </g>
      <g stroke="#398600" strokeWidth=".8">
        <path d="M614 415v88a26 8 0 0 0 51 0v-68z" fill="#80ff3f" />
        <path d="M619 425v84" fill="none" />
        <path d="M744 480v85a26 11 0 0 0 52 0v-75z" fill="#80ff3f" />
        <path d="M750 490v86" fill="none" />
        <path d="M1093 400v62a25 7 0 0 0 50 0v-70z" fill="#80ff3f" />
        <path d="M1098 400v68" fill="none" />
      </g>
      <Cyl x={827} y={480} r={9} b={508} fill="#b8ff9d" line="#4c8a43" />
      <Cyl x={1066} y={405} r={8} b={434} fill="#b8ff9d" line="#4c8a43" />
      <path d="M583 410 587 502 591 580M587 502 760 588 1172 463M1168 390l4 73 3 78M591 580l172 87 412-126" stroke="#143d38" fill="none" />
      <path d="M752 496h8l8 169-9 1z" fill="#fff" stroke="#222" />

      {/* top clamp plate */}
      <path d="M557 366 971 238 1190 351 1192 382 778 509 559 396z" fill="#3fffff" fillOpacity=".96" />
      <path d="M583 410 972 290 1168 371V389L778 509z" fill="#34ffd6" />
      <path d="M557 366 559 396 583 410 777 479z" fill="#30f2ef" opacity=".35" />
      <g stroke="#18b79e" strokeWidth=".9" fill="none" opacity=".75">
        <ellipse cx="962" cy="417" rx="74" ry="33" />
        <path d="M888 420c0 40 146 50 146-4M914 399c5 24 75 25 92-4" />
        <path d="M722 467c15-18 130-18 150 8M720 467v22M872 475v10M888 435c-20-20-40-15-50-10" />
        {/* cooling bores */}
        <path d="M751 365 926 455M744 381 914 468M838 338 1009 430M830 353 997 443M893 322l171 92M885 338l167 88M702 385l170 87M695 399l164 85" />
        <path d="M755 368l15 8q-10 5-8 16l-14-8M895 324l14 7q-10 5-8 15l-14-7" />
        <ellipse cx="747" cy="373" rx="7" ry="9" />
        <ellipse cx="834" cy="346" rx="8" ry="9" />
        <ellipse cx="889" cy="330" rx="8" ry="9" />
        <path d="M866 397v45M886 397v51M848 440v65M890 455v20M820 455v35M610 433q25 8 52-3" />
      </g>
      <path d="M967 320v62l46 15v-73z" fill="#2effc1" />
      <path d="M963 320v55M967 320v60M1013 320v70" stroke="#1cae93" strokeWidth=".8" />
      <g fill="none" stroke="#1cae93" strokeWidth=".8">
        <path d="M678 393v45q7 4 14 0v-45M917 319v43q8 5 16 0v-43M1056 390v25M1071 390v22M816 466v25M836 466v22" />
        <path d="M1092 385v30M1144 385v18M742 485v10" />
      </g>
      {[[865, 478], [920, 462], [1003, 437], [1058, 420]].map(([x, y]) => (
        <g key={x} stroke="#1b515d" strokeWidth=".8">
          <circle cx={x} cy={y} r="7" fill="#fff" />
          <path d={`M${x - 7} ${y + 2}a7 8 0 1 1 14-3z`} fill="#50dfff" />
        </g>
      ))}
      <g stroke="#0d6e73" strokeWidth=".9" fill="none">
        <path d="M559 396 972 270 1190 382M583 410 972 290M779 490 1168 371M1168 371v18M971 238v32" />
        <path d="M701 387l152 3M897 388l158 3M912 316l-20 30M884 396l-51 70M780 443l40-5" stroke="#146158" />
      </g>

      {guideHoles.map(([x, y, b]) => (
        <g key={x}>
          <g stroke="#0d8290" strokeWidth=".9">
            <path d={`M${x - 29} ${b - 4}v12a30 12 0 0 0 60 0v-12`} fill="#38f2dc" />
            <ellipse cx={x + 1} cy={b - 3} rx="30" ry="12" fill="#3ee8ef" />
            <path d={`M${x - 19} ${b + 5}q20-9 40 0q-20 7-40 0z`} fill="#31f7c8" />
          </g>
          <Cyl x={x} y={y} r={17} ry={7} b={b - 3} fill="#85fbff" top="#fff" />
        </g>
      ))}
      {coverHoles.map(([x, y, b]) => (
        <g key={x}>
          <Cyl x={x + 1} y={b} r={12} b={b + 5} fill="#7df6ff" />
          <Cyl x={x} y={y} r={17} ry={7} b={b - 4} fill="#7ffaff" top="#fff" />
        </g>
      ))}

      {/* sprue bushing */}
      <Cyl x={875} y={376} r={21} b={391} fill="#7df5ff" />
      <g stroke="#144955" strokeWidth=".9">
        <path d="M835 361l22 16q18 6 36 0l18-16z" fill="#8ffaff" />
        <ellipse cx="873" cy="358" rx="38" ry="15" fill="#fff" />
        <path d="M855 371q20-9 39 0" fill="none" />
        <path d="M852 346l10 21" />
      </g>
      <path d="M557 366 971 238 1190 351 1192 382 778 509 559 396zM557 366 777 479 1190 351M777 479l1 30" stroke="#123d45" fill="none" />

      {/* screw tips on the parting face */}
      {[[832, 590, 634], [1072, 515, 559]].map(([x, y, b]) => (
        <g key={x}>
          <ellipse cx={x} cy={b + 1} rx="11" ry="4" fill="#397fc7" stroke="#123f77" />
          <Cyl x={x - 1} y={y - 2} r={8} b={b - 1} fill={blue} top="#234d7d" line="#174583" />
          <path d={`M${x - 6} ${y - 2}l2-2 2 3 2-4 2 4 3-2`} stroke="#b6d5ff" strokeWidth=".7" fill="none" />
        </g>
      ))}

      {/* orientation triad */}
      <path d="M265 789V754" stroke="#35d435" />
      <path d="M265 789 235 798" stroke="#3434c8" />
      <path d="M265 789l22 11" stroke="#d02525" />
      <g fontFamily="Liberation Sans, sans-serif" fontSize="12" fill="#222">
        <text x="267" y="751" fontSize="10">Y</text>
        <text x="227" y="802">Z</text>
        <text x="291" y="801">X</text>
      </g>
    </svg>
  );
}

/* ---------- status bar ---------- */

function LayoutButton({ d, label, active }: { d: string; label: string; active?: boolean }) {
  return (
    <button aria-label={label} className={clsx('flex h-full w-7 items-center justify-center', active && 'border-r border-[#b5b8ba] bg-[#e0e3e5]')}>
      <svg viewBox="0 0 16 16" width="16" height="16">
        <defs>
          <linearGradient id="pane" x2="1" y2="1">
            <stop offset="0" stopColor="#fff" />
            <stop offset="1" stopColor="#a9cfe1" />
          </linearGradient>
        </defs>
        <path d="M.5.500h15v15H.5z" fill="url(#pane)" stroke="#3b7e9d" />
        <path d={d} stroke="#3b7e9d" fill="none" />
      </svg>
    </button>
  );
}

function StatusBar() {
  return (
    <footer className="flex h-[27px] shrink-0 items-center border-t-2 border-[#a4a7aa] bg-[#eceef0] text-xs text-[#333]">
      <LayoutButton d="M.5 2.500h15M5.500 2v13" label="树布局" active />
      <LayoutButton d="M.5 2.500h15M4.500 2v13M8.500 2v13" label="双栏布局" />
      <LayoutButton d="M.5 8h15M.5 10h15" label="上下布局" />
      <span className="h-full w-px bg-[#b5b8ba]" />
      <LayoutButton d="" label="全屏布局" />
      <p className="ml-1 whitespace-nowrap">中键=缩放 (上下)；滚动 (左右)</p>
      <div className="mr-3.5 ml-auto flex h-full items-stretch">
        <span className="flex items-center gap-1 border-l border-[#b5b8ba] px-1"><NoteIcon />90mm.asm</span>
        <span className="flex w-[37px] items-center justify-center border-l border-[#b5b8ba]">毫米</span>
        <span className="flex w-7 items-center justify-center border-l border-[#b5b8ba]">kg</span>
        <span className="flex w-[77px] items-center border-l border-[#b5b8ba] pl-1.5">选定了 0 个</span>
        <label className="relative flex w-20 items-center border border-[#b5b8ba] bg-[#f4f5f6]">
          <span className="sr-only">选择过滤器</span>
          <select className="h-full w-full appearance-none bg-transparent pl-1.5">
            <option>智能</option>
          </select>
          <Caret className="pointer-events-none absolute right-1 text-[#666]" />
        </label>
      </div>
    </footer>
  );
}

function Watermark() {
  return (
    <div className="pointer-events-none absolute right-3 -bottom-px w-[166px]">
      <div className="flex justify-between font-['Noto_Sans_CJK_SC'] text-[40px] leading-[44px] font-light italic">
        <span className="text-[#ff6a3c]">野火</span>
        <span className="text-black">论坛</span>
      </div>
      <svg viewBox="0 0 18 42" className="absolute -top-3.5 left-16 h-[42px] w-[18px]">
        <path d="M5 0c15 15 17 30-2 42 2-8 6-15 5-24C8 11 8 6 5 0z" fill="#ff6a3c" />
        <path d="M1 8c5 8 6 15 2 27 9-10 9-19-2-27z" fill="#ff6a3c" />
      </svg>
      <p className="font-['Liberation_Sans'] text-lg leading-5 italic text-[#858585]">www.proewildfire.cn</p>
    </div>
  );
}

function Taskbar() {
  return (
    <div className="flex h-2 shrink-0 items-end justify-around bg-[#0c2f52]">
      <span className="h-0.5 w-2 bg-[#dfe7ee]" />
      <span className="h-0.5 w-3 bg-[#cfd98c]" />
      <span className="h-0.5 w-3 bg-[#3f6b91]" />
      <span className="h-0.5 w-3 bg-[#e8e6a0]" />
      <span className="h-0.5 w-3 bg-[#4b7fae]" />
      <span className="h-0.5 w-4 bg-[#5a9bd0]" />
      <span className="h-0.5 w-3 bg-[#4b7fae]" />
      <span className="h-full w-[100px] bg-[#17508c]" />
      <span className="h-0.5 w-4 bg-[#b9cbd8]" />
      <span className="h-0.5 w-3 bg-white" />
      <span className="h-0.5 w-2 bg-[#dd5544]" />
    </div>
  );
}

export default function App() {
  return (
    <div className="flex h-screen overflow-hidden bg-[#f2f3f5] font-['Noto_Sans','Noto_Sans_CJK_SC',sans-serif]">
      <div className="flex min-w-0 flex-1 flex-col">
        <TitleBar />
        <MenuTabs />
        <Ribbon />
        <div className="relative flex min-h-0 flex-1 flex-col">
          <main className="flex min-h-0 flex-1 border-t-2 border-[#a9adb3] bg-[#f6f8fa]">
            <ModelTree />
            <div className="ml-1 w-2 shrink-0 border-x border-[#a9b3bc] bg-[#e6f1f8]" />
            <section className="flex min-w-0 flex-1 flex-col border-x border-[#a9b3bc] bg-white px-0.5 pt-0.5">
              <div className="flex h-[22px] shrink-0 items-center border border-[#a9cfe4] bg-[#d9f2fd] text-xs text-[#222]">
                <h2 className="flex-1 text-center">模型</h2>
                <button aria-label="关闭模型" className="flex h-full w-[22px] items-center border-l-2 border-[#a9cfe4] pl-0.5">
                  <svg viewBox="0 0 10 10" width="9" height="9"><path d="M1 1l8 8M9 1 1 9" stroke="#a8b8c2" strokeWidth="2" /></svg>
                </button>
              </div>
              <div className="min-h-0 flex-1"><Mold /></div>
            </section>
          </main>
          <StatusBar />
          <Watermark />
        </div>
        <Taskbar />
      </div>
      <div className="w-2 shrink-0 border-l border-[#8f9294] bg-white">
        <div className="h-[136px] border-b border-[#c5c8cc] bg-[#eceef1]" />
      </div>
    </div>
  );
}
